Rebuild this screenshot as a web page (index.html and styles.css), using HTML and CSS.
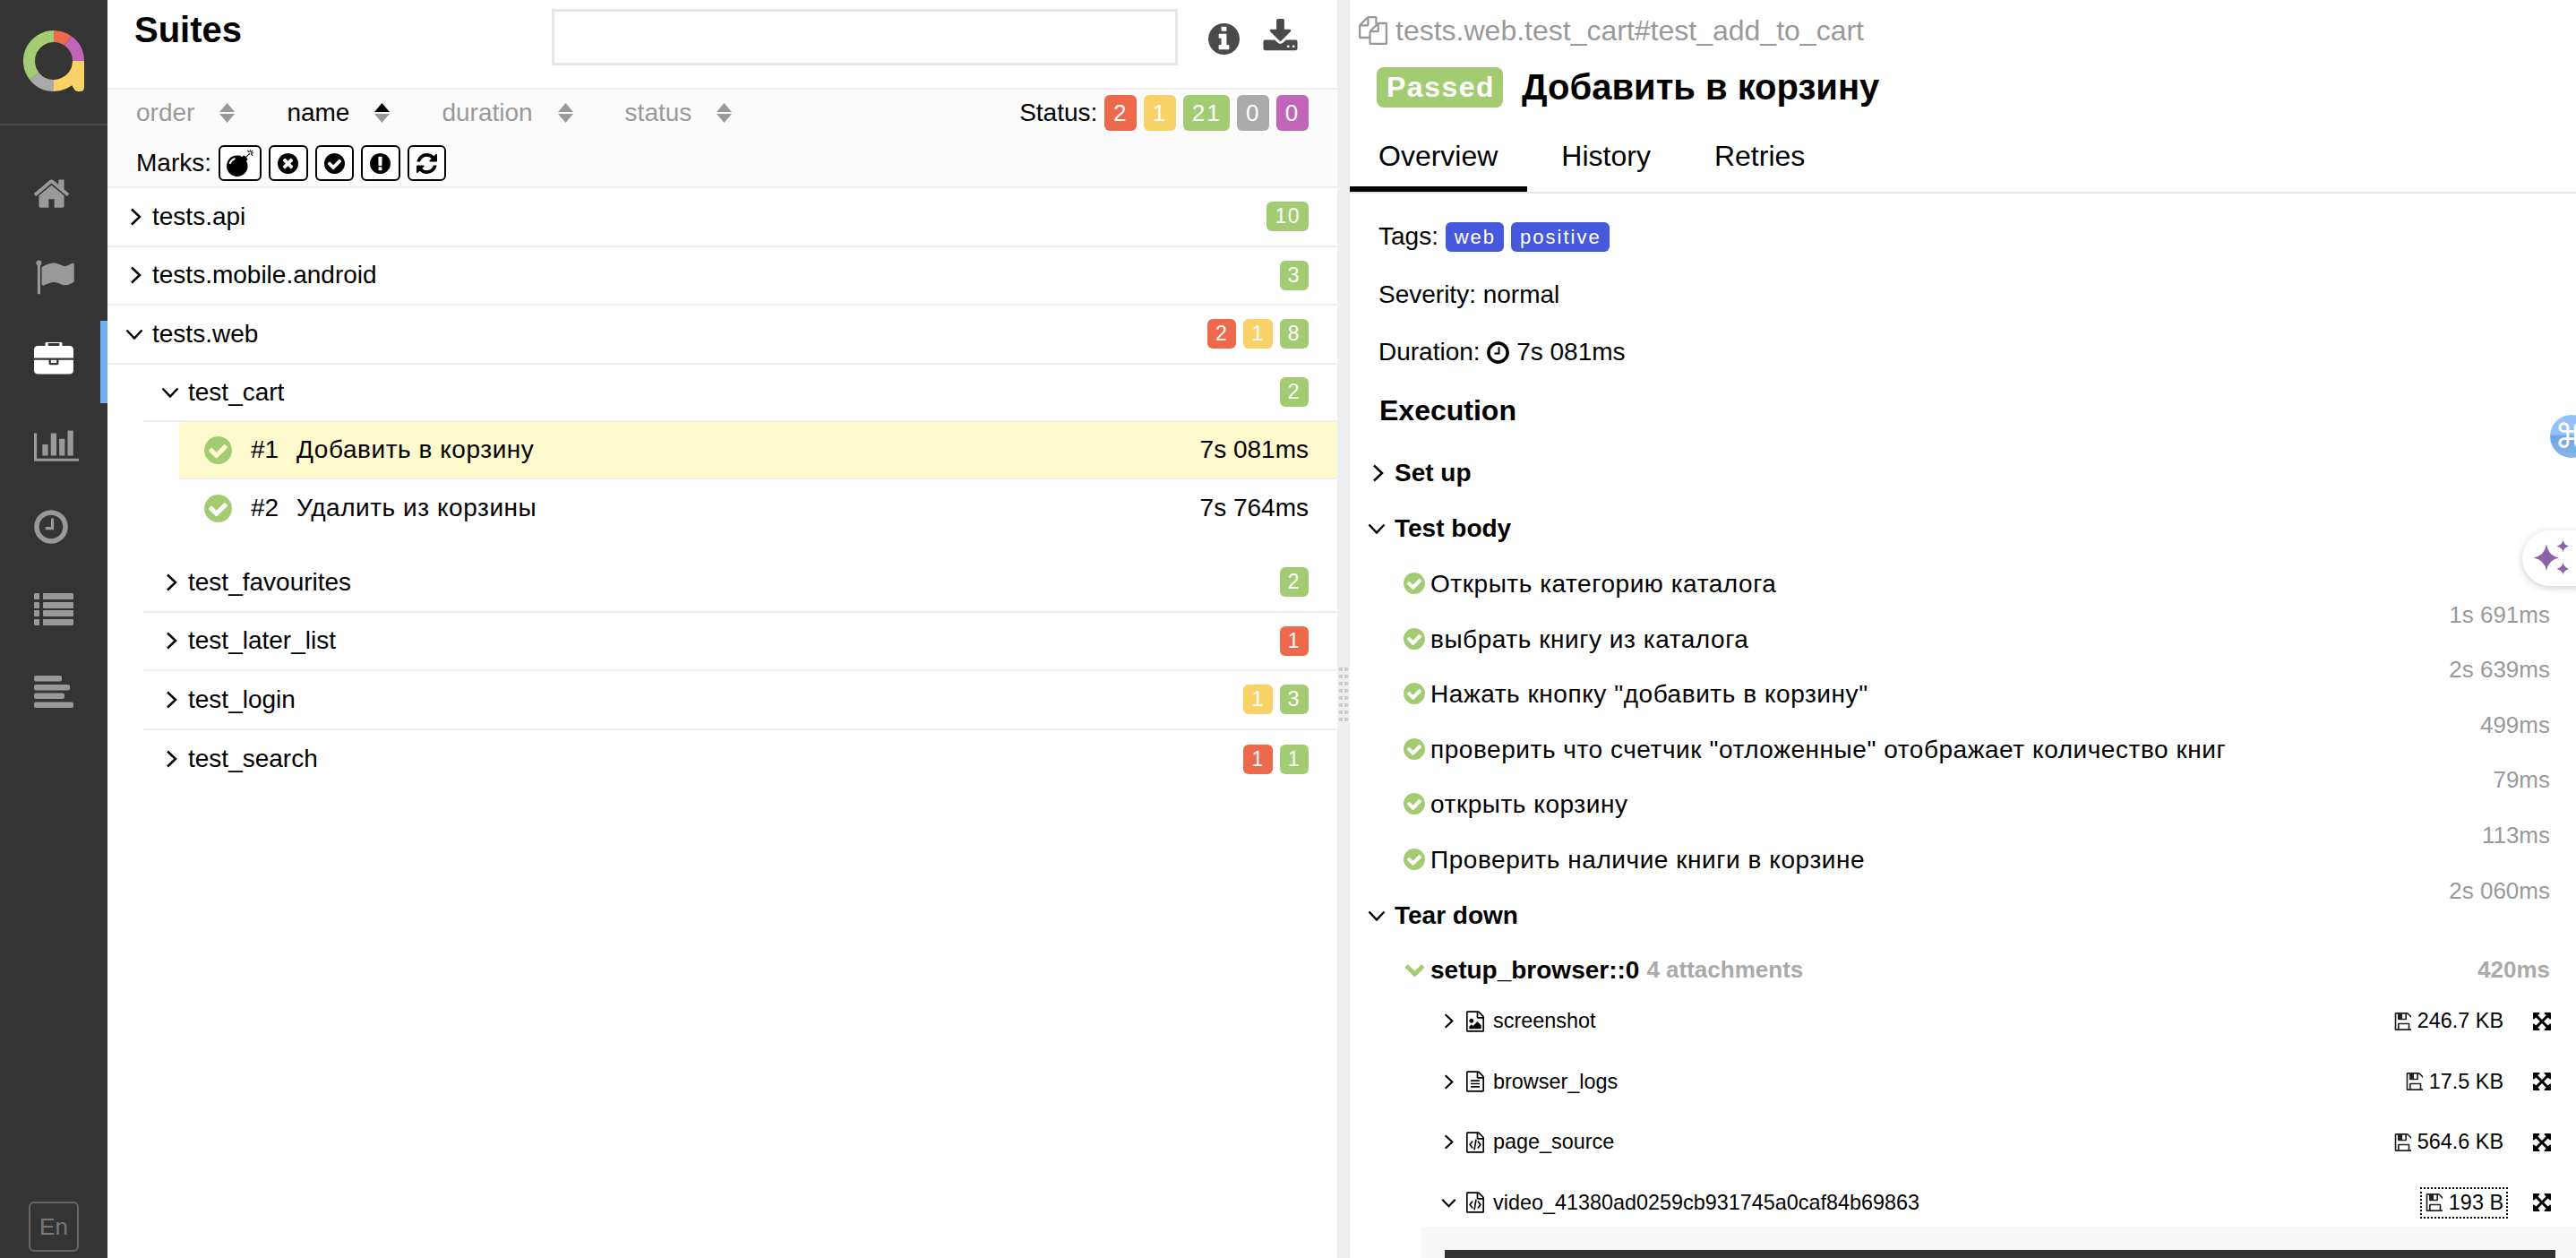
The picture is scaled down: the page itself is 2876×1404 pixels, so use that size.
FILE: index.html
```html
<!DOCTYPE html>
<html lang="en">
<head>
  <meta charset="UTF-8" />
  <meta name="viewport" content="width=device-width, initial-scale=1.0"/>
  <title>Allure Report</title>
  <link rel="stylesheet" href="styles.css">
</head>
<body>
  <svg class="sprite" xmlns="http://www.w3.org/2000/svg">
    <symbol id="i-home" viewBox="96 160 1600 1792"><path d="M1472 992v480q0 26-19 45t-45 19h-384v-384h-256v384h-384q-26 0-45-19t-19-45v-480q0-1 .5-3t.5-3l575-474 575 474q1 2 1 6zm223-69l-62 74q-8 9-21 11h-3q-13 0-21-7l-692-577-692 577q-12 8-24 7-13-2-21-11l-62-74q-8-10-7-23.5t11-21.5l719-599q32-26 76-26t76 26l244 204v-195q0-14 9-23t23-9h192q14 0 23 9t9 23v408l219 182q10 8 11 21.5t-7 23.5z"/></symbol>
    <symbol id="i-flag" viewBox="64 110 1728 1792"><path d="M320 256q0 72-64 110v1266q0 13-9.5 22.5t-22.5 9.5h-64q-13 0-22.5-9.5t-9.5-22.5v-1266q-64-38-64-110 0-53 37.5-90.5t90.5-37.5 90.5 37.5 37.5 90.5zm1472 64v763q0 25-12.5 38.5t-39.5 27.5q-215 116-369 116-61 0-123.5-22t-108.5-48-115.5-48-142.5-22q-192 0-464 146-17 9-33 9-26 0-45-19t-19-45v-742q0-32 31-55 21-14 79-43 236-120 421-120 107 0 200 29t219 88q38 19 88 19 54 0 117.5-21t110-47 88-47 54.5-21q26 0 45 19t19 45z"/></symbol>
    <symbol id="i-briefcase" viewBox="0 90 1792 1792"><path d="M640 256h512v-128h-512v128zm1152 640v480q0 66-47 113t-113 47h-1472q-66 0-113-47t-47-113v-480h672v160q0 26 19 45t45 19h320q26 0 45-19t19-45v-160h672zm-768 0v128h-256v-128h256zm768-480v384h-1792v-384q0-66 47-113t113-47h352v-160q0-40 28-68t68-28h576q40 0 68 28t28 68v160h352q66 0 113 47t47 113z"/></symbol>
    <symbol id="i-chart" viewBox="0 0 2048 1792"><path d="M640 896v512h-256v-512h256zm384-512v1024h-256v-1024h256zm1024 1152v128h-2048v-1280h128v1152h1920zm-640-896v768h-256v-768h256zm384-384v1152h-256v-1152h256z"/></symbol>
    <symbol id="i-clock" viewBox="128 0 1536 1792"><path d="M1024 544v448q0 14-9 23t-23 9h-320q-14 0-23-9t-9-23v-64q0-14 9-23t23-9h224v-352q0-14 9-23t23-9h64q14 0 23 9t9 23zm416 352q0-148-73-273t-198-198-273-73-273 73-198 198-73 273 73 273 198 198 273 73 273-73 198-198 73-273zm224 0q0 209-103 385.5t-279.5 279.5-385.5 103-385.5-103-279.5-279.5-103-385.5 103-385.5 279.5-279.5 385.5-103 385.5 103 279.5 279.5 103 385.5z"/></symbol>
    <symbol id="i-list" viewBox="0 0 44 36"><rect x="0" y="0" width="6" height="7" rx="1"/><rect x="10" y="0" width="34" height="7" rx="1"/><rect x="0" y="10" width="6" height="7" rx="1"/><rect x="10" y="10" width="34" height="7" rx="1"/><rect x="0" y="19" width="6" height="7" rx="1"/><rect x="10" y="19" width="34" height="7" rx="1"/><rect x="0" y="29" width="6" height="7" rx="1"/><rect x="10" y="29" width="34" height="7" rx="1"/></symbol>
    <symbol id="i-timeline" viewBox="0 0 44 36"><rect x="0" y="0" width="31" height="6.5" rx="2"/><rect x="0" y="10" width="40" height="6.5" rx="2"/><rect x="0" y="19.5" width="34" height="6.5" rx="2"/><rect x="0" y="29.5" width="44" height="6.5" rx="2"/></symbol>
    <symbol id="i-info" viewBox="128 128 1536 1536"><path d="M1152 1376v-160q0-14-9-23t-23-9h-96v-512q0-14-9-23t-23-9h-320q-14 0-23 9t-9 23v160q0 14 9 23t23 9h96v320h-96q-14 0-23 9t-9 23v160q0 14 9 23t23 9h448q14 0 23-9t9-23zm-128-896v-160q0-14-9-23t-23-9h-192q-14 0-23 9t-9 23v160q0 14 9 23t23 9h192q14 0 23-9t9-23zm640 416q0 209-103 385.5t-279.5 279.5-385.5 103-385.5-103-279.5-279.5-103-385.5 103-385.5 279.5-279.5 385.5-103 385.5 103 279.5 279.5 103 385.5z"/></symbol>
    <symbol id="i-download" viewBox="0 0 1792 1792"><path d="M1344 1344q0-26-19-45t-45-19-45 19-19 45 19 45 45 19 45-19 19-45zm256 0q0-26-19-45t-45-19-45 19-19 45 19 45 45 19 45-19 19-45zm128-224v320q0 40-28 68t-68 28h-1472q-40 0-68-28t-28-68v-320q0-40 28-68t68-28h465l135 136q58 56 136 56t136-56l136-136h464q40 0 68 28t28 68zm-325-569q17 41-14 70l-448 448q-18 19-45 19t-45-19l-448-448q-31-29-14-70 17-39 59-39h256v-448q0-26 19-45t45-19h256q26 0 45 19t19 45v448h256q42 0 59 39z"/></symbol>
    <symbol id="i-check" viewBox="128 128 1536 1536"><path d="M1412 734q0-28-18-46l-91-90q-19-19-45-19t-45 19l-408 407-226-226q-19-19-45-19t-45 19l-91 90q-18 18-18 46 0 27 18 45l362 362q19 19 45 19 27 0 46-19l543-543q18-18 18-45zm252 162q0 209-103 385.5t-279.5 279.5-385.5 103-385.5-103-279.5-279.5-103-385.5 103-385.5 279.5-279.5 385.5-103 385.5 103 279.5 279.5 103 385.5z"/></symbol>
    <symbol id="i-times" viewBox="128 128 1536 1536"><path d="M1277 1122q0-26-19-45l-181-181 181-181q19-19 19-45 0-27-19-46l-90-90q-19-19-46-19-26 0-45 19l-181 181-181-181q-19-19-45-19-27 0-46 19l-90 90q-19 19-19 46 0 26 19 45l181 181-181 181q-19 19-19 45 0 27 19 46l90 90q19 19 46 19 26 0 45-19l181-181 181 181q19 19 45 19 27 0 46-19l90-90q19-19 19-46zm387-226q0 209-103 385.5t-279.5 279.5-385.5 103-385.5-103-279.5-279.5-103-385.5 103-385.5 279.5-279.5 385.5-103 385.5 103 279.5 279.5 103 385.5z"/></symbol>
    <symbol id="i-exclaim" viewBox="128 128 1536 1536"><path d="M896 128q209 0 385.5 103t279.5 279.5 103 385.5-103 385.5-279.5 279.5-385.5 103-385.5-103-279.5-279.5-103-385.5 103-385.5 279.5-279.5 385.5-103zm128 1247v-190q0-14-9-24t-22-10h-192q-13 0-23 10t-10 24v190q0 14 10 24t23 10h192q13 0 22-10t9-24zm-2-344l18-621q0-12-10-18-10-8-24-8h-220q-14 0-24 8-10 6-10 18l17 621q0 10 10 17.5t24 7.5h185q14 0 23.5-7.5t10.5-17.5z"/></symbol>
    <symbol id="i-refresh" viewBox="128 128 1536 1536"><path d="M1639 1056q0 5-1 7-64 268-268 434.5t-478 166.5q-146 0-282.5-55t-243.5-157l-129 129q-19 19-45 19t-45-19-19-45v-448q0-26 19-45t45-19h448q26 0 45 19t19 45-19 45l-137 137q71 66 161 102t187 36q134 0 250-65t186-179q11-17 53-117 8-23 30-23h192q13 0 22.5 9.5t9.5 22.5zm25-800v448q0 26-19 45t-45 19h-448q-26 0-45-19t-19-45 19-45l138-138q-148-137-349-137-134 0-250 65t-186 179q-11 17-53 117-8 23-30 23h-199q-13 0-22.5-9.5t-9.5-22.5v-7q65-268 270-434.5t480-166.5q146 0 284 55.5t245 156.5l130-129q19-19 45-19t45 19 19 45z"/></symbol>
    <symbol id="i-bomb" viewBox="0 0 1792 1792"><path d="M571 589q-10-25-34-35t-49 0q-108 44-191 127t-127 191q-10 25 0 49t35 34q13 5 24 5 42 0 60-40 34-84 98.5-148.5t148.5-98.5q25-11 35-35t0-49zm942-356l46 46-244 243 68 68q19 19 19 45.5t-19 45.5l-64 64q89 161 89 343 0 143-55.5 273.5t-150 225-225 150-273.5 55.5-273.5-55.5-225-150-150-225-55.5-273.5 55.5-273.5 150-225 225-150 273.5-55.5q182 0 343 89l64-64q19-19 45.5-19t45.5 19l68 68zm8-56q-10 10-22 10-13 0-23-10l-91-90q-9-10-9-23t9-23q10-9 23-9t23 9l90 91q10 9 10 22.5t-10 22.5zm230 230q-11 9-23 9t-23-9l-90-91q-10-9-10-22.5t10-22.5q9-10 22.5-10t22.5 10l91 90q9 10 9 23t-9 23zm41-183q0 14-9 23t-23 9h-96q-14 0-23-9t-9-23 9-23 23-9h96q14 0 23 9t9 23zm-192-192v96q0 14-9 23t-23 9-23-9-9-23v-96q0-14 9-23t23-9 23 9 9 23zm151 55l-91 90q-10 10-22 10-13 0-23-10-10-9-10-22.5t10-22.5l90-91q10-9 23-9t23 9q9 10 9 23t-9 23z"/></symbol>
    <symbol id="i-floppy" viewBox="0 128 1536 1536"><path d="M512 1536h768v-384h-768v384zm896 0h128v-896q0-14-10-38.5t-20-34.5l-281-281q-10-10-34-20t-39-10v416q0 40-28 68t-68 28h-576q-40 0-68-28t-28-68v-416h-128v1280h128v-416q0-40 28-68t68-28h832q40 0 68 28t28 68v416zm-384-928v-320q0-13-9.5-22.5t-22.5-9.5h-192q-13 0-22.5 9.5t-9.5 22.5v320q0 13 9.5 22.5t22.5 9.5h192q13 0 22.5-9.5t9.5-22.5zm640 32v928q0 40-28 68t-68 28h-1344q-40 0-68-28t-28-68v-1344q0-40 28-68t68-28h928q40 0 88 20t76 48l280 280q28 28 48 76t20 88z"/></symbol>
    <symbol id="i-expand" viewBox="128 128 1536 1536"><path d="M1411 541l-355 355 355 355 144-144q29-31 70-14 39 17 39 59v448q0 26-19 45t-45 19h-448q-42 0-59-40-17-39 14-69l144-144-355-355-355 355 144 144q31 30 14 69-17 40-59 40h-448q-26 0-45-19t-19-45v-448q0-42 40-59 39-17 69 14l144 144 355-355-355-355-144 144q-19 19-45 19-12 0-24-5-40-17-40-59v-448q0-26 19-45t45-19h448q42 0 59 40 17 39-14 69l-144 144 355 355 355-355-144-144q-31-30-14-69 17-40 59-40h448q26 0 45 19t19 45v448q0 42-39 59-13 5-25 5-26 0-45-19z"/></symbol>
    <symbol id="i-files" viewBox="0 0 1792 1792"><path d="M1696 384q40 0 68 28t28 68v1216q0 40-28 68t-68 28h-960q-40 0-68-28t-28-68v-288h-544q-40 0-68-28t-28-68v-672q0-40 20-88t48-76l408-408q28-28 76-48t88-20h416q40 0 68 28t28 68v328q68-40 128-40h416zm-544 213l-299 299h299v-299zm-640-384l-299 299h299v-299zm196 647l316-316v-416h-384v416q0 40-28 68t-68 28h-416v640h512v-256q0-40 20-88t48-76zm956 804v-1152h-384v416q0 40-28 68t-68 28h-416v640h896z"/></symbol>
    <symbol id="i-file-image" viewBox="128 0 1536 1792"><path d="M1596 380q28 28 48 76t20 88v1152q0 40-28 68t-68 28h-1344q-40 0-68-28t-28-68v-1600q0-40 28-68t68-28h896q40 0 88 20t76 48zm-444-244v376h376q-10-29-22-41l-313-313q-12-12-41-22zm384 1528v-1024h-416q-40 0-68-28t-28-68v-416h-768v1536h1280zm-128-448v320h-1024v-192l192-192 128 128 384-384zm-832-192q-80 0-136-56t-56-136 56-136 136-56 136 56 56 136-56 136-136 56z"/></symbol>
    <symbol id="i-file-text" viewBox="128 0 1536 1792"><path d="M1596 380q28 28 48 76t20 88v1152q0 40-28 68t-68 28h-1344q-40 0-68-28t-28-68v-1600q0-40 28-68t68-28h896q40 0 88 20t76 48zm-444-244v376h376q-10-29-22-41l-313-313q-12-12-41-22zm384 1528v-1024h-416q-40 0-68-28t-28-68v-416h-768v1536h1280zm-1024-864q0-14 9-23t23-9h704q14 0 23 9t9 23v64q0 14-9 23t-23 9h-704q-14 0-23-9t-9-23v-64zm736 224q14 0 23 9t9 23v64q0 14-9 23t-23 9h-704q-14 0-23-9t-9-23v-64q0-14 9-23t23-9h704zm0 256q14 0 23 9t9 23v64q0 14-9 23t-23 9h-704q-14 0-23-9t-9-23v-64q0-14 9-23t23-9h704z"/></symbol>
    <symbol id="i-file-code" viewBox="128 0 1536 1792"><path d="M1596 380q28 28 48 76t20 88v1152q0 40-28 68t-68 28h-1344q-40 0-68-28t-28-68v-1600q0-40 28-68t68-28h896q40 0 88 20t76 48zm-444-244v376h376q-10-29-22-41l-313-313q-12-12-41-22zm384 1528v-1024h-416q-40 0-68-28t-28-68v-416h-768v1536h1280zm-928-896q8-11 21-12.5t24 6.5l51 38q11 8 12.5 21t-6.5 24l-182 243 182 243q8 11 6.5 24t-12.5 21l-51 38q-11 8-24 6.5t-21-12.5l-226-301q-14-19 0-38zm802 301q14 19 0 38l-226 301q-8 11-21 12.5t-24-6.5l-51-38q-11-8-12.5-21t6.5-24l182-243-182-243q-8-11-6.5-24t12.5-21l51-38q11-8 24-6.5t21 12.5zm-620 461q-13-2-20.5-13t-5.5-24l138-831q2-13 13-20.5t24-5.5l63 10q13 2 20.5 13t5.5 24l-138 831q-2 13-13 20.5t-24 5.5z"/></symbol>
    <symbol id="i-right" viewBox="0 0 13 20"><polyline points="2,1.5 11,10 2,18.5"/></symbol>
    <symbol id="i-down" viewBox="0 0 20 12"><polyline points="1.5,1.5 10,10.5 18.5,1.5"/></symbol>
    <symbol id="i-sort" viewBox="0 0 17 22"><path class="sort-up" d="M8.5 0L17 10H0z"/></symbol>
    <symbol id="i-sort-down" viewBox="0 0 17 22"><path d="M0 12h17L8.500 22z"/></symbol>
  </svg>

  <aside class="sidebar">
    <div class="logo">
      <svg width="120" height="138" viewBox="0 0 120 138" fill="none" stroke-width="13">
        <path d="M60 40.500A27.500 27.500 0 0 1 75.800 45.500" stroke="#ec694c"/>
        <path d="M75.800 45.500A27.500 27.500 0 0 1 87.500 68" stroke="#c264b8"/>
        <path d="M87.500 68A27.500 27.500 0 0 1 60 95.500" stroke="#f8d167"/>
        <path d="M81 68h13v29q0 5-4 5h-3q-3 0-4.500-3l-3-5z" fill="#f8d167"/>
        <path d="M60 95.500A27.500 27.500 0 0 1 38.300 85" stroke="#aaaaaa"/>
        <path d="M38.300 85A27.500 27.500 0 0 1 60 40.500" stroke="#a3cc72"/>
      </svg>
    </div>
    <nav class="menu">
      <a class="menu-item"><svg class="menu-icon home"><use href="#i-home"/></svg></a>
      <a class="menu-item"><svg class="menu-icon flag"><use href="#i-flag"/></svg></a>
      <a class="menu-item active"><svg class="menu-icon case"><use href="#i-briefcase"/></svg></a>
      <a class="menu-item"><svg class="menu-icon chart"><use href="#i-chart"/></svg></a>
      <a class="menu-item"><svg class="menu-icon clock"><use href="#i-clock"/></svg></a>
      <a class="menu-item"><svg class="menu-icon lines"><use href="#i-list"/></svg></a>
      <a class="menu-item"><svg class="menu-icon lines"><use href="#i-timeline"/></svg></a>
    </nav>
    <div class="lang">En</div>
  </aside>

  <section class="suites">
    <header class="suites-head">
      <h2>Suites</h2>
      <input class="search" type="text" />
      <svg class="head-info"><use href="#i-info"/></svg>
      <svg class="head-download"><use href="#i-download"/></svg>
    </header>

    <div class="toolbar">
      <div class="toolbar-row">
        <span class="sorter">order <svg class="sort"><use class="arrow-up" href="#i-sort"/><use href="#i-sort-down"/></svg></span>
        <span class="sorter current">name <svg class="sort"><use class="arrow-up" href="#i-sort"/><use href="#i-sort-down"/></svg></span>
        <span class="sorter">duration <svg class="sort"><use class="arrow-up" href="#i-sort"/><use href="#i-sort-down"/></svg></span>
        <span class="sorter">status <svg class="sort"><use class="arrow-up" href="#i-sort"/><use href="#i-sort-down"/></svg></span>
        <div class="status-filter">
          <span>Status:</span>
          <span class="count big failed">2</span>
          <span class="count big broken">1</span>
          <span class="count big passed">21</span>
          <span class="count big skipped">0</span>
          <span class="count big unknown">0</span>
        </div>
      </div>
      <div class="toolbar-row marks">
        <span>Marks:</span>
        <button class="mark wide"><svg class="bomb"><use href="#i-bomb"/></svg></button>
        <button class="mark"><svg><use href="#i-times"/></svg></button>
        <button class="mark"><svg><use href="#i-check"/></svg></button>
        <button class="mark"><svg><use href="#i-exclaim"/></svg></button>
        <button class="mark"><svg><use href="#i-refresh"/></svg></button>
      </div>
    </div>

    <div class="tree">
      <div class="node">
        <span class="toggle"><svg class="chev right"><use href="#i-right"/></svg></span>
        <span class="node-name">tests.api</span>
        <span class="counts"><span class="count passed">10</span></span>
      </div>
      <div class="node">
        <span class="toggle"><svg class="chev right"><use href="#i-right"/></svg></span>
        <span class="node-name">tests.mobile.android</span>
        <span class="counts"><span class="count passed">3</span></span>
      </div>
      <div class="node">
        <span class="toggle"><svg class="chev down"><use href="#i-down"/></svg></span>
        <span class="node-name">tests.web</span>
        <span class="counts">
          <span class="count failed">2</span>
          <span class="count broken">1</span>
          <span class="count passed">8</span>
        </span>
      </div>
      <div class="children">
        <div class="node cart">
          <span class="toggle"><svg class="chev down"><use href="#i-down"/></svg></span>
          <span class="node-name">test_cart</span>
          <span class="counts"><span class="count passed">2</span></span>
        </div>
        <div class="tests">
          <div class="test selected">
            <svg class="test-icon"><use href="#i-check"/></svg>
            <span class="test-order">#1</span>
            <span class="test-name">Добавить в корзину</span>
            <span class="test-time">7s 081ms</span>
          </div>
          <div class="test">
            <svg class="test-icon"><use href="#i-check"/></svg>
            <span class="test-order">#2</span>
            <span class="test-name">Удалить из корзины</span>
            <span class="test-time">7s 764ms</span>
          </div>
        </div>
        <div class="node">
          <span class="toggle"><svg class="chev right"><use href="#i-right"/></svg></span>
          <span class="node-name">test_favourites</span>
          <span class="counts"><span class="count passed">2</span></span>
        </div>
        <div class="node">
          <span class="toggle"><svg class="chev right"><use href="#i-right"/></svg></span>
          <span class="node-name">test_later_list</span>
          <span class="counts"><span class="count failed">1</span></span>
        </div>
        <div class="node">
          <span class="toggle"><svg class="chev right"><use href="#i-right"/></svg></span>
          <span class="node-name">test_login</span>
          <span class="counts">
            <span class="count broken">1</span>
            <span class="count passed">3</span>
          </span>
        </div>
        <div class="node last">
          <span class="toggle"><svg class="chev right"><use href="#i-right"/></svg></span>
          <span class="node-name">test_search</span>
          <span class="counts">
            <span class="count failed">1</span>
            <span class="count passed">1</span>
          </span>
        </div>
      </div>
    </div>
  </section>

  <div class="splitter"><span class="grip"></span></div>

  <section class="details">
    <div class="fullname">
      <svg class="copy"><use href="#i-files"/></svg>
      <span>tests.web.test_cart#test_add_to_cart</span>
    </div>
    <div class="title-row">
      <span class="status-badge">Passed</span>
      <h1>Добавить в корзину</h1>
    </div>
    <div class="tabs">
      <a class="tab active">Overview</a>
      <a class="tab">History</a>
      <a class="tab">Retries</a>
    </div>

    <div class="info-line">Tags: <span class="tag">web</span> <span class="tag">positive</span></div>
    <div class="info-line">Severity: normal</div>
    <div class="info-line">Duration: <svg class="dur-clock"><use href="#i-clock"/></svg> 7s 081ms</div>
    <h3>Execution</h3>

    <div class="stage">
      <span class="toggle"><svg class="chev right"><use href="#i-right"/></svg></span>Set up
    </div>
    <div class="stage">
      <span class="toggle"><svg class="chev down"><use href="#i-down"/></svg></span>Test body
    </div>

    <div class="step">
      <svg class="step-icon"><use href="#i-check"/></svg>
      <span class="step-name">Открыть категорию каталога</span>
      <span class="step-time">1s 691ms</span>
    </div>
    <div class="step">
      <svg class="step-icon"><use href="#i-check"/></svg>
      <span class="step-name">выбрать книгу из каталога</span>
      <span class="step-time">2s 639ms</span>
    </div>
    <div class="step">
      <svg class="step-icon"><use href="#i-check"/></svg>
      <span class="step-name">Нажать кнопку "добавить в корзину"</span>
      <span class="step-time">499ms</span>
    </div>
    <div class="step">
      <svg class="step-icon"><use href="#i-check"/></svg>
      <span class="step-name">проверить что счетчик "отложенные" отображает количество книг</span>
      <span class="step-time">79ms</span>
    </div>
    <div class="step">
      <svg class="step-icon"><use href="#i-check"/></svg>
      <span class="step-name">открыть корзину</span>
      <span class="step-time">113ms</span>
    </div>
    <div class="step">
      <svg class="step-icon"><use href="#i-check"/></svg>
      <span class="step-name">Проверить наличие книги в корзине</span>
      <span class="step-time">2s 060ms</span>
    </div>

    <div class="stage">
      <span class="toggle"><svg class="chev down"><use href="#i-down"/></svg></span>Tear down
    </div>
    <div class="fixture">
      <svg class="fixture-chev" viewBox="0 0 25 15"><polyline points="3,3 12.500,12 22,3"/></svg>
      <b>setup_browser::0</b>
      <span class="fixture-note">4 attachments</span>
      <span class="fixture-time">420ms</span>
    </div>

    <div class="attachment">
      <svg class="att-chev right"><use href="#i-right"/></svg>
      <svg class="att-file"><use href="#i-file-image"/></svg>
      <span class="att-name">screenshot</span>
      <span class="att-size"><svg class="floppy"><use href="#i-floppy"/></svg>246.7 KB</span>
      <svg class="att-expand"><use href="#i-expand"/></svg>
    </div>
    <div class="attachment">
      <svg class="att-chev right"><use href="#i-right"/></svg>
      <svg class="att-file"><use href="#i-file-text"/></svg>
      <span class="att-name">browser_logs</span>
      <span class="att-size"><svg class="floppy"><use href="#i-floppy"/></svg>17.5 KB</span>
      <svg class="att-expand"><use href="#i-expand"/></svg>
    </div>
    <div class="attachment">
      <svg class="att-chev right"><use href="#i-right"/></svg>
      <svg class="att-file"><use href="#i-file-code"/></svg>
      <span class="att-name">page_source</span>
      <span class="att-size"><svg class="floppy"><use href="#i-floppy"/></svg>564.6 KB</span>
      <svg class="att-expand"><use href="#i-expand"/></svg>
    </div>
    <div class="attachment open">
      <svg class="att-chev down"><use href="#i-down"/></svg>
      <svg class="att-file"><use href="#i-file-code"/></svg>
      <span class="att-name">video_41380ad0259cb931745a0caf84b69863</span>
      <span class="att-size focused"><svg class="floppy"><use href="#i-floppy"/></svg>193 B</span>
      <svg class="att-expand"><use href="#i-expand"/></svg>
    </div>
    <div class="preview"><div class="player"></div></div>
  </section>

  <div class="float-cmd">⌘</div>
  <div class="float-spark">
    <svg width="44" height="40" viewBox="0 0 44 40">
      <path d="M15 4.500Q17 17 29 19.500Q17 22 15 34Q13 22 0.500 19.500Q13 17 15 4.500z"/>
      <path d="M33.500 0Q34.500 5 40 6.500Q34.500 8 33.500 13Q32.500 8 26.500 6.500Q32.500 5 33.500 0z"/>
      <path d="M33.500 25Q34.500 30 40 32Q34.500 33.500 33.500 38Q32.500 33.500 26.500 32Q32.500 30 33.500 25z"/>
    </svg>
  </div>
</body>
</html>
```
FILE: styles.css
```css
body {
  margin: 0;
  height: 1404px;
  display: flex;
  overflow: hidden;
  font-family: "Liberation Sans", Arial, sans-serif;
  font-size: 28px;
  color: #000;
  background: #fff;
}

.sprite {
  display: none;
}

/* sidebar */
.sidebar {
  width: 120px;
  flex: none;
  display: flex;
  flex-direction: column;
  background: #343434;
}

.logo {
  height: 138px;
  border-bottom: 2px solid #4a4a4a;
}

.logo svg {
  display: block;
}

.menu {
  margin-top: 34px;
}

.menu-item {
  height: 92px;
  display: flex;
  align-items: center;
  padding-left: 38px;
  fill: #999;
}

.menu-item.active {
  fill: #fff;
  box-shadow: inset -8px 0 0 #74aef0;
}

.menu-icon {
  height: 44px;
}

.home { width: 39px; }
.flag { width: 43px; margin-left: 2px; }
.case { width: 44px; }
.chart { width: 50px; }
.clock { width: 38px; }

.menu-icon.lines {
  width: 44px;
  height: 36px;
}

.lang {
  width: 56px;
  height: 56px;
  box-sizing: border-box;
  margin: auto 0 7px 32px;
  border: 2px solid #666;
  border-radius: 6px;
  color: #777;
  font-size: 26px;
  line-height: 52px;
  text-align: center;
}

/* suites pane */
.suites {
  width: 1373px;
  flex: none;
}

.suites-head {
  height: 100px;
  box-sizing: border-box;
  display: flex;
  align-items: flex-start;
  padding: 0 43px 0 30px;
  border-bottom: 2px solid #eeeeee;
}

.suites-head h2 {
  flex: 1;
  margin: 0;
  font-size: 40px;
  line-height: 66px;
}

.search {
  width: 699px;
  height: 63px;
  box-sizing: border-box;
  margin-top: 10px;
  border: 3px solid #e6e6e6;
  background: #fff;
}

.head-info {
  width: 35px;
  height: 35px;
  margin: 26px 25px 0 34px;
  fill: #4a4a4a;
}

.head-download {
  width: 41px;
  height: 41px;
  margin-top: 21px;
  fill: #4a4a4a;
}

.toolbar {
  height: 110px;
  box-sizing: border-box;
  padding: 0 32px;
  background: #fbfbfb;
  border-bottom: 2px solid #eeeeee;
}

.toolbar-row {
  height: 52px;
  display: flex;
  align-items: center;
}

.sorter {
  display: flex;
  align-items: center;
  gap: 28px;
  margin-right: 58px;
  color: #999;
}

.sort {
  width: 17px;
  height: 22px;
  fill: #999;
}

.sorter.current {
  color: #000;
}

.current .arrow-up {
  fill: #000;
}

.status-filter {
  margin-left: auto;
  display: flex;
  align-items: center;
  gap: 8px;
}

.count {
  min-width: 14px;
  height: 33px;
  padding: 0 9px;
  border-radius: 6px;
  color: #fff;
  font-size: 23px;
  letter-spacing: 1.5px;
  line-height: 33px;
  text-align: center;
}

.count.big {
  height: 40px;
  padding: 0 9.7px;
  font-size: 26px;
  letter-spacing: 2px;
  line-height: 40px;
}

.failed { background: #ec694c; }
.broken { background: #f8d167; }
.passed { background: #a3cc72; }
.skipped { background: #aaaaaa; }
.unknown { background: #c264b8; }

.marks {
  height: 56px;
  padding-top: 4px;
  box-sizing: border-box;
  gap: 8px;
}

.mark {
  width: 43.5px;
  height: 40px;
  padding: 0;
  display: flex;
  align-items: center;
  justify-content: center;
  background: #fff;
  border: 2px solid #000;
  border-radius: 6px;
}

.mark.wide {
  width: 48px;
}

.mark svg {
  width: 23px;
  height: 23px;
  fill: #000;
}

.mark svg.bomb {
  width: 30px;
  height: 30px;
}

.node {
  height: 65.5px;
  box-sizing: border-box;
  display: flex;
  align-items: center;
  padding: 0 32px 0 20px;
  border-bottom: 2px solid #eeeeee;
}

.node.last {
  border-bottom: none;
}

.toggle {
  width: 30px;
  flex: none;
  display: flex;
}

.chev {
  fill: none;
  stroke: #000;
  stroke-width: 2.5;
}

.chev.right {
  width: 13px;
  height: 20px;
  margin-left: 5px;
}

.chev.down {
  width: 20px;
  height: 12px;
}

.counts {
  margin-left: auto;
  display: flex;
  gap: 8px;
}

.children {
  margin-left: 40px;
}

.node.cart {
  height: 64.5px;
}

.tests {
  margin: 0 0 19px 40px;
}

.test {
  height: 64px;
  box-sizing: border-box;
  display: flex;
  align-items: center;
  padding: 0 32px 0 28px;
}

.test.selected {
  background: #fffacd;
  border-bottom: 2px solid #eeeeee;
}

.test-icon {
  width: 31px;
  height: 31px;
  fill: #a3cc72;
}

.test-order {
  width: 51px;
  margin-left: 21px;
}

.test-name {
  letter-spacing: 0.55px;
}

.test-time {
  margin-left: auto;
}

.splitter {
  width: 14px;
  flex: none;
  background: #eceef0;
}

.grip {
  display: block;
  width: 10px;
  height: 60px;
  margin: 745px auto 0;
  background: conic-gradient(from 270deg at 4px 4px, #cccccc 25%, transparent 0) 0 0 / 6px 8px;
}

/* details pane */
.details {
  flex: 1;
  min-width: 0;
  overflow: hidden;
}

.fullname {
  height: 68px;
  display: flex;
  align-items: center;
  gap: 9px;
  padding-left: 10px;
  color: #999;
  font-size: 32px;
}

.copy {
  width: 32px;
  height: 32px;
  fill: #999;
}

.title-row {
  height: 54px;
  margin-top: 2px;
  display: flex;
  align-items: center;
  padding-left: 30px;
}

.status-badge {
  padding: 0 9px 0 11px;
  height: 45px;
  border-radius: 8px;
  background: #a3cc72;
  color: #fff;
  font-size: 32px;
  font-weight: bold;
  letter-spacing: 1.5px;
  line-height: 45px;
}

.title-row h1 {
  margin: 0 0 0 21px;
  font-size: 40px;
}

.tabs {
  height: 82px;
  box-sizing: border-box;
  margin-top: 10px;
  display: flex;
  gap: 6px;
  border-bottom: 2px solid #e6e6e6;
}

.tab {
  height: 80px;
  box-sizing: border-box;
  padding: 0 33px 0 32px;
  font-size: 32px;
  line-height: 80px;
}

.tab.active {
  border-bottom: 6px solid #000;
}

.info-line {
  height: 64.5px;
  display: flex;
  align-items: center;
  padding-left: 32px;
  white-space: pre;
}

.tabs + .info-line {
  margin-top: 16px;
}

.tag {
  height: 33px;
  margin-right: 8px;
  padding: 0 9px 0 10px;
  border-radius: 6px;
  background: #4658dc;
  color: #fff;
  font-size: 22px;
  letter-spacing: 2px;
  line-height: 33px;
}

.dur-clock {
  width: 25px;
  height: 29px;
  fill: #000;
}

.details h3 {
  height: 65px;
  margin: 0;
  padding-left: 33px;
  font-size: 32px;
  line-height: 65px;
}

.stage {
  height: 62px;
  display: flex;
  align-items: center;
  padding-left: 20px;
  font-weight: bold;
}

.details h3 + .stage {
  margin-top: 6.5px;
}

.step {
  height: 61.6px;
  box-sizing: border-box;
  display: flex;
  padding: 11px 29px 0 60px;
}

.step-icon {
  width: 24px;
  height: 24px;
  margin: 7px 6px 0 0;
  fill: #a3cc72;
}

.step-name {
  line-height: 40px;
  letter-spacing: 0.55px;
}

.step-time {
  margin: 0 0 -11px auto;
  align-self: flex-end;
  color: #999;
  font-size: 26px;
  line-height: 16px;
}

.fixture {
  height: 60px;
  display: flex;
  align-items: center;
  padding: 0 29px 0 60px;
}

.fixture-chev {
  width: 25px;
  height: 15px;
  margin-right: 5px;
  fill: none;
  stroke: #a3cc72;
  stroke-width: 5;
}

.fixture-note {
  margin-left: 8px;
  color: #aaa;
  font-size: 26px;
  font-weight: bold;
}

.fixture-time {
  margin-left: auto;
  color: #aaa;
  font-size: 26px;
  font-weight: bold;
}

.attachment {
  height: 54px;
  margin-bottom: 13.5px;
  display: flex;
  align-items: center;
  padding: 0 28px 0 102px;
  font-size: 23.4px;
}

.attachment.open {
  margin-bottom: 0;
}

.att-chev {
  width: 17px;
  height: 17px;
  margin-right: 11px;
  fill: none;
  stroke: #000;
  stroke-width: 2.5;
}

.att-file {
  width: 20px;
  height: 24px;
  margin-right: 10px;
  fill: #000;
}

.att-size {
  margin-left: auto;
  display: flex;
  align-items: center;
  gap: 7px;
  padding: 2px 3px;
  border: 2px solid transparent;
}

.att-size.focused {
  border: 2px dotted #000;
}

.floppy {
  width: 20px;
  height: 20px;
  fill: #222;
}

.att-expand {
  width: 20px;
  height: 20px;
  margin-left: 28px;
  fill: #000;
}

.preview {
  height: 35px;
  box-sizing: border-box;
  margin-left: 80px;
  padding: 26px 23px 0 26px;
  background: #f7f7f7;
}

.player {
  height: 100%;
  background: #333;
}

/* floating widgets at the right edge */
.float-cmd {
  position: absolute;
  left: 2847px;
  top: 463px;
  width: 48px;
  height: 48px;
  border-radius: 50%;
  background: linear-gradient(#94c2f8 0 45%, #6ea3e2 50%, #8ab6ea);
  color: #fff;
  font-family: "DejaVu Sans", sans-serif;
  font-size: 38px;
  line-height: 48px;
  text-align: center;
}

.float-spark {
  position: absolute;
  left: 2816px;
  top: 592px;
  width: 90px;
  height: 62px;
  box-sizing: border-box;
  padding: 11px 0 0 12px;
  border-radius: 31px;
  background: #fff;
  box-shadow: 0 2px 8px rgba(0, 0, 0, 0.2);
  fill: #8a63a8;
}
```
